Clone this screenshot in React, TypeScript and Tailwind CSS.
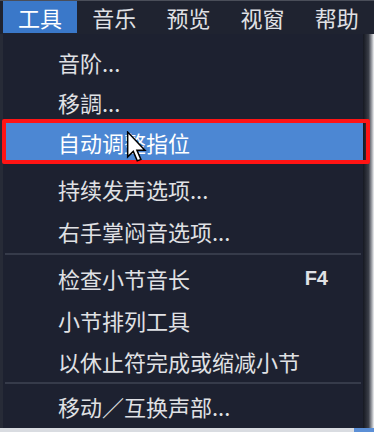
import React from 'react';

const FONT = '"Noto Sans CJK SC", "Noto Sans", sans-serif';

type Row =
  | { kind: 'item'; label: string; h: string; shortcut?: string; active?: boolean; pad?: string }
  | { kind: 'sep'; h: string };

const rows: Row[] = [
  { kind: 'item', label: '音阶...', h: 'h-[40px]' },
  { kind: 'item', label: '移調...', h: 'h-[40px]' },
  { kind: 'item', label: '自动调整指位', h: 'h-[40px]', active: true },
  { kind: 'item', label: '持续发声选项...', h: 'h-[48px]', pad: 'pt-[6px]' },
  { kind: 'item', label: '右手掌闷音选项...', h: 'h-[41px]' },
  { kind: 'sep', h: 'h-[5px]' },
  { kind: 'item', label: '检查小节音长', h: 'h-[43px]', shortcut: 'F4' },
  { kind: 'item', label: '小节排列工具', h: 'h-[42px]' },
  { kind: 'item', label: '以休止符完成或缩减小节', h: 'h-[40px]' },
  { kind: 'sep', h: 'h-[3px]' },
  { kind: 'item', label: '移动／互换声部...', h: 'h-[44px]' },
];

const menus = ['工具', '音乐', '预览', '视窗', '帮助'];

function Cursor() {
  return (
    <svg
      className="absolute left-[126px] top-[131px] z-20"
      width="21"
      height="32"
      viewBox="0 0 13 21"
    >
      <path
        d="M0.7 0.7 L0.7 17 L4.4 13.4 L7 19.6 L9.4 18.6 L6.8 12.6 L12 12.6 Z"
        fill="#ffffff"
        stroke="#000000"
        strokeWidth="1"
        strokeLinejoin="miter"
      />
    </svg>
  );
}

export default function App() {
  return (
    <div
      className="relative w-[374px] h-[432px] overflow-hidden bg-[#e4e6ea] text-[#e0e1e5]"
      style={{ fontFamily: FONT }}
    >
      {/* menu bar */}
      <div className="h-[34px] bg-[#1f2330] border-t border-[#4a4e59] flex pl-[3px]">
        {menus.map((m, i) => (
          <div
            key={m}
            className={`h-[32px] w-[75px] pl-[15px] flex items-center text-[22px] leading-none ${
              i === 0 ? 'bg-[#3a78c9] text-white' : ''
            }`}
          >
            {m}
          </div>
        ))}
      </div>

      <div className="flex h-[394px]">
        <div className="w-[3px] bg-[#272b37]" />
        {/* dropdown panel */}
        <div className="w-[360px] bg-[#1d2130] pt-[8px] flex flex-col">
          {rows.map((r, i) =>
            r.kind === 'sep' ? (
              <div key={i} className={`${r.h} flex items-center px-[2px]`}>
                <div className="h-[2px] w-full bg-[#363b4a]" />
              </div>
            ) : (
              <div
                key={i}
                className={`${r.h} ${r.pad ?? ''} relative flex items-center pl-[55px] pr-[35px] text-[22px] leading-none ${
                  r.active ? 'bg-[#4c87d3] text-white' : ''
                }`}
              >
                <span className="flex-1 whitespace-nowrap">{r.label}</span>
                {r.shortcut && (
                  <span
                    className="text-[20px] font-bold text-[#e0e1e5]"
                    style={{ fontFamily: '"Liberation Sans", sans-serif' }}
                  >
                    {r.shortcut}
                  </span>
                )}
              </div>
            )
          )}
        </div>
        {/* shadow strip on the right */}
        <div className="w-[11px] bg-gradient-to-r from-[#151821] via-[#3a3e48] to-[#f2f3f5]" />
      </div>

      {/* bottom edge */}
      <div className="h-[4px] flex">
        <div className="flex-1 bg-[#d9dce1]" />
        <div className="w-[20px] bg-[#5b8fd6]" />
      </div>

      {/* red annotation box */}
      <div className="absolute left-[2px] top-[119px] w-[368px] h-[45px] border-[4px] border-[#ff1414] rounded-[2px] z-10 pointer-events-none" />

      <Cursor />
    </div>
  );
}
